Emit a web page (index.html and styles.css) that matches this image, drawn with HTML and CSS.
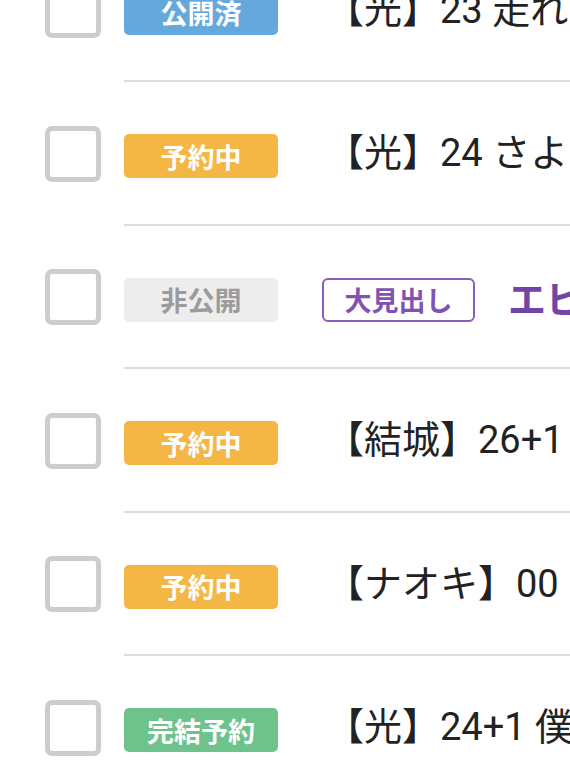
FILE: index.html
```html
<!DOCTYPE html>
<html lang="ja">
<head>
<meta charset="utf-8">
<link rel="stylesheet" href="styles.css">
</head>
<body>
<ul class="list">
  <li class="row">
    <span class="check"></span>
    <div class="main">
      <span class="badge badge-blue">公開済</span>
      <span class="title">【光】23 走れメロス</span>
    </div>
  </li>
  <li class="row">
    <span class="check"></span>
    <div class="main">
      <span class="badge badge-orange">予約中</span>
      <span class="title">【光】24 さようなら</span>
    </div>
  </li>
  <li class="row">
    <span class="check"></span>
    <div class="main">
      <span class="badge badge-gray">非公開</span>
      <span class="heading-tag">大見出し</span>
      <span class="title title-heading">エピローグ</span>
    </div>
  </li>
  <li class="row">
    <span class="check"></span>
    <div class="main">
      <span class="badge badge-orange">予約中</span>
      <span class="title">【結城】26+1 おまけ</span>
    </div>
  </li>
  <li class="row">
    <span class="check"></span>
    <div class="main">
      <span class="badge badge-orange">予約中</span>
      <span class="title">【ナオキ】00 はじまり</span>
    </div>
  </li>
  <li class="row">
    <span class="check"></span>
    <div class="main">
      <span class="badge badge-green">完結予約</span>
      <span class="title">【光】24+1 僕らの未来</span>
    </div>
  </li>
</ul>
</body>
</html>
```

FILE: styles.css
```css
html, body {
  margin: 0;
  padding: 0;
  background: #ffffff;
  overflow: hidden;
}

body {
  font-family: Roboto, "Noto Sans CJK JP", sans-serif;
  color: #222222;
}

.list {
  list-style: none;
  margin: -61.5px 0 0 0;
  padding: 0;
}

.row {
  display: flex;
  align-items: center;
  height: 143.5px;
}

.check {
  flex: none;
  box-sizing: border-box;
  width: 56px;
  height: 56px;
  margin-left: 45px;
  margin-right: 23px;
  border: 5px solid #cdcdcd;
  border-radius: 7px;
  background: #ffffff;
}

.main {
  flex: 1;
  min-width: 0;
  height: 100%;
  box-sizing: border-box;
  border-bottom: 2px solid #dcdcdc;
  display: flex;
  align-items: center;
  gap: 48px;
  overflow: hidden;
  padding-bottom: 1px;
}

.badge {
  flex: none;
  width: 154px;
  height: 44px;
  margin-top: 8px;
  border-radius: 5px;
  display: flex;
  align-items: center;
  justify-content: center;
  font-family: "Noto Sans CJK JP", sans-serif;
  font-weight: 700;
  font-size: 27px;
  color: #ffffff;
  line-height: 1;
}

.badge-blue { background: #65a9dc; }
.badge-orange { background: #f4b746; }
.badge-green { background: #6ec38d; }
.badge-gray { background: #ededed; color: #9b9b9b; }

.heading-tag {
  flex: none;
  box-sizing: border-box;
  width: 153px;
  height: 44px;
  margin-top: 8px;
  margin-left: -4px;
  margin-right: -15px;
  border: 2px solid #8a5dbd;
  border-radius: 6px;
  display: flex;
  align-items: center;
  justify-content: center;
  font-family: "Noto Sans CJK JP", sans-serif;
  font-weight: 700;
  font-size: 27px;
  color: #7f52b4;
  line-height: 1;
}

.title {
  white-space: nowrap;
  font-size: 38px;
  line-height: 1;
  margin-top: 2px;
}

.title-heading {
  font-family: "Noto Sans CJK JP", sans-serif;
  font-weight: 700;
  color: #7144a8;
}
```
